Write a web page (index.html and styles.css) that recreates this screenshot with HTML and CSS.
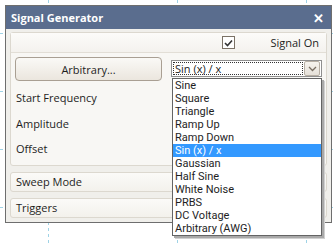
FILE: index.html
```html
<!DOCTYPE html>
<html>
<head>
<meta charset="utf-8">
<link rel="stylesheet" href="styles.css">
</head>
<body>
<div class="window">
  <div class="titlebar">
    <span class="title">Signal Generator</span>
    <span class="close">✕</span>
  </div>
  <div class="client">
    <div class="group main">
      <div class="group-head">
        <span class="check">
          <svg width="9" height="8" viewBox="0 0 9 8"><path d="M1 4 L3.5 6.5 L8 1.5" fill="none" stroke="#333" stroke-width="1.6"/></svg>
        </span>
        <span class="check-label">Signal On</span>
      </div>
      <div class="group-body">
        <div class="row-top">
          <button class="btn">Arbitrary...</button>
          <div class="combo">
            <span class="combo-text"><span class="focus">Sin (x) / x</span></span>
            <span class="combo-arrow">
              <svg width="9" height="6" viewBox="0 0 9 6"><path d="M1 1 L4.5 4.5 L8 1" fill="none" stroke="#7a7064" stroke-width="1.3"/></svg>
            </span>
          </div>
        </div>
        <div class="label">Start Frequency</div>
        <div class="label">Amplitude</div>
        <div class="label">Offset</div>
      </div>
    </div>
    <div class="group collapsed">Sweep Mode</div>
    <div class="group collapsed">Triggers</div>
  </div>
</div>
<ul class="dropdown">
  <li>Sine</li>
  <li>Square</li>
  <li>Triangle</li>
  <li>Ramp Up</li>
  <li>Ramp Down</li>
  <li class="sel">Sin (x) / x</li>
  <li>Gaussian</li>
  <li>Half Sine</li>
  <li>White Noise</li>
  <li>PRBS</li>
  <li>DC Voltage</li>
  <li>Arbitrary (AWG)</li>
</ul>
</body>
</html>
```
FILE: styles.css
```css
html, body {
  margin: 0;
  padding: 0;
}
body {
  width: 335px;
  height: 246px;
  overflow: hidden;
  font-family: "Open Sans", "Noto Sans", sans-serif;
  font-size: 11px;
  color: #1e1e1e;
  background-color: #fff;
  background-image:
    repeating-linear-gradient(to bottom, #9fd3e6 0 3px, transparent 3px 6px),
    repeating-linear-gradient(to bottom, #9fd3e6 0 3px, transparent 3px 6px),
    repeating-linear-gradient(to bottom, #9fd3e6 0 3px, transparent 3px 6px),
    repeating-linear-gradient(to right, #9fd3e6 0 3px, transparent 3px 6px),
    repeating-linear-gradient(to right, #9fd3e6 0 3px, transparent 3px 6px),
    repeating-linear-gradient(to right, #9fd3e6 0 3px, transparent 3px 6px),
    repeating-linear-gradient(to right, #9fd3e6 0 3px, transparent 3px 6px);
  background-size: 1px 246px, 1px 246px, 1px 246px, 335px 1px, 335px 1px, 335px 1px, 335px 1px;
  background-position: 48px 0, 177px 0, 306px 0, 0 33px, 0 91px, 0 149px, 0 207px;
  background-repeat: no-repeat;
  position: relative;
}
.window {
  margin: 5px 0 0 5px;
  width: 325px;
  height: 216px;
  border: 1px solid #6e6e6e;
  background: #f0efeb;
  display: flex;
  flex-direction: column;
}
.titlebar {
  height: 23px;
  background: #5a6d8e;
  color: #fff;
  display: flex;
  align-items: center;
  justify-content: space-between;
  padding: 0 7px 0 5px;
  flex: none;
}
.title {
  font-weight: bold;
  font-size: 11px;
}
.close {
  font-weight: bold;
  font-size: 13px;
}
.client {
  padding: 3px 4px 3px 4px;
  display: flex;
  flex-direction: column;
  gap: 6px;
}
.group {
  border: 1px solid #dcd8cf;
  border-radius: 3px;
  background: #f8f7f4;
}
.main {
  height: 132px;
  display: flex;
  flex-direction: column;
}
.group-head {
  height: 19px;
  border-bottom: 1px solid #e2ded6;
  background: linear-gradient(#fcfbf9, #f4f2ee);
  display: flex;
  align-items: center;
  justify-content: flex-end;
  padding-right: 7px;
}
.check {
  width: 11px;
  height: 11px;
  border: 1px solid #7b7266;
  background: #fff;
  display: flex;
  align-items: center;
  justify-content: center;
  margin-right: 35px;
}
.group-body {
  padding: 4px 4px 0 4px;
}
.row-top {
  display: flex;
  align-items: flex-start;
  gap: 9px;
  margin-bottom: 4px;
}
.btn {
  width: 148px;
  height: 24px;
  border: 1px solid #a99f93;
  border-radius: 4px;
  background: linear-gradient(#faf9f6, #ebe6de);
  font: inherit;
  color: #1e1e1e;
  padding: 0;
}
.combo {
  margin-top: 3px;
  width: 148px;
  height: 15px;
  border: 1px solid #8f8f8f;
  background: #fff;
  display: flex;
  align-items: center;
  padding: 0 1px;
}
.combo-text {
  flex: 1;
  height: 13px;
  display: flex;
}
.focus {
  flex: 1;
  border: 1px dotted #333;
  line-height: 11px;
  padding-left: 1px;
}
.combo-arrow {
  width: 14px;
  height: 13px;
  margin-left: 1px;
  border: 1px solid #b7afa4;
  border-radius: 2px;
  background: linear-gradient(#f6f3ee, #e6e1d9);
  display: flex;
  align-items: center;
  justify-content: center;
}
.label {
  height: 25.5px;
  line-height: 25.5px;
  padding-left: 1px;
}
.collapsed {
  height: 18px;
  line-height: 18px;
  padding-left: 5px;
  background: linear-gradient(#fbfaf8, #f3f1ec);
}
.dropdown {
  position: absolute;
  left: 172px;
  top: 78px;
  width: 148px;
  margin: 0;
  padding: 0;
  list-style: none;
  background: #fff;
  border: 1px solid #646464;
  box-shadow: 2px 2px 0 #a9a9a9, 3px 3px 0 #d0d0d0;
  font-family: Roboto, "Open Sans", sans-serif;
  font-size: 11px;
}
.dropdown li {
  height: 13px;
  line-height: 13px;
  padding-left: 2px;
}
.dropdown li.sel {
  background: #3399ff;
  color: #fff;
}
```
